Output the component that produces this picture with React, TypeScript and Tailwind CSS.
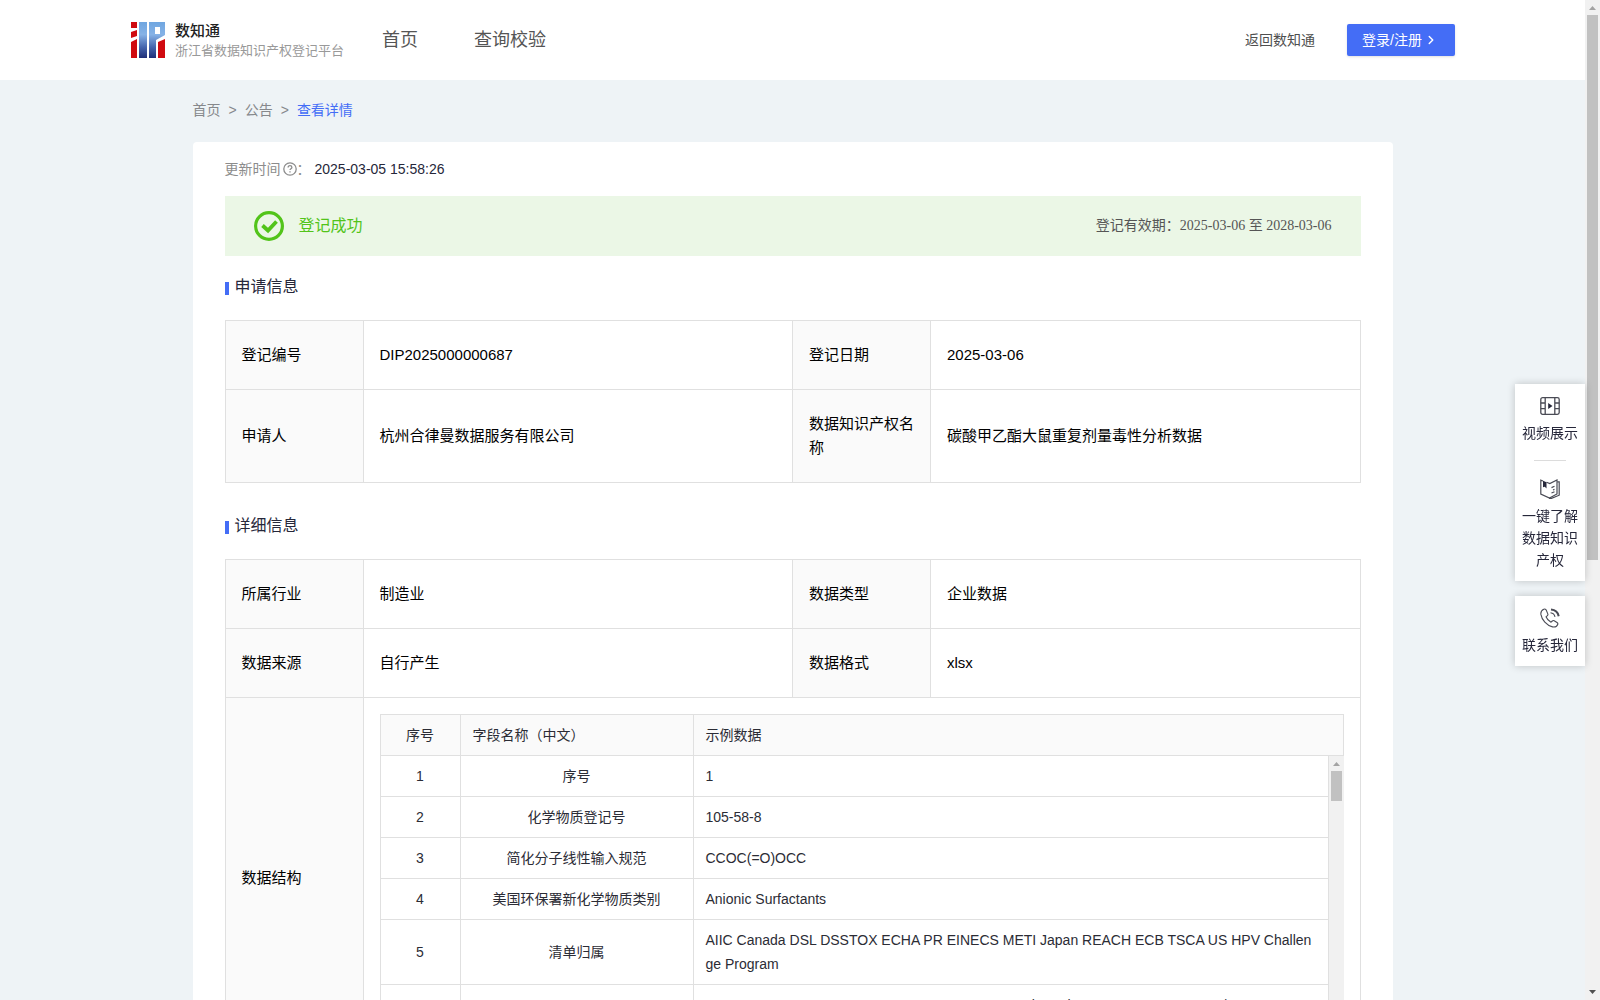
import type { ReactNode } from "react"
import { ChevronRight } from "lucide-react"

const sampleRows = [
  { name: "序号", value: "1" },
  { name: "化学物质登记号", value: "105-58-8" },
  { name: "简化分子线性输入规范", value: "CCOC(=O)OCC" },
  { name: "美国环保署新化学物质类别", value: "Anionic Surfactants" },
  {
    name: "清单归属",
    value: "AIIC Canada DSL DSSTOX ECHA PR EINECS METI Japan REACH ECB TSCA US HPV Challenge Program",
  },
  {
    name: "数据库归属",
    value: "ISSSTY, DART, ECHA ReproTox, Genotox OASIS, Phys Chem EPI, CLI, Cosm, DB/OASIS, Exp Bio",
  },
]

const Logo = () => (
  <svg width="34" height="36" viewBox="0 0 34 36" aria-hidden="true">
    <defs>
      <linearGradient id="logo-blue" x1="0" y1="0" x2="0" y2="36" gradientUnits="userSpaceOnUse">
        <stop offset="0" stopColor="#6fa6e0" />
        <stop offset="0.35" stopColor="#86b2e6" />
        <stop offset="0.7" stopColor="#4565ad" />
        <stop offset="1" stopColor="#1f2f78" />
      </linearGradient>
    </defs>
    <path d="M0 0h6v6H0zM0 10l6-2v6l-6 2zM0 20l6-3v19H0z" fill="#d00a10" />
    <path d="M8 0h8v36H8z" fill="url(#logo-blue)" />
    <path d="M18 0h16v13l-9 5v18h-7zM24 5v7h5V5z" fillRule="evenodd" fill="url(#logo-blue)" />
    <path d="M27 20l7-3v19h-7z" fill="#d00a10" />
  </svg>
)

const VideoIcon = () => (
  <svg width="20" height="20" viewBox="0 0 20 20" fill="none" stroke="#4a4b55" strokeWidth="1.3" aria-hidden="true">
    <rect x="0.8" y="1.6" width="18.4" height="16.8" rx="1.8" />
    <path d="M5.2 1.6v16.8M14.8 1.6v16.8M0.8 7h4.4M0.8 12.6h4.4M14.8 7h4.4M14.8 12.6h4.4" />
    <path d="M8.2 7v6l4.3-3z" fill="#26273a" stroke="none" />
  </svg>
)

const BookIcon = () => (
  <svg width="20" height="20" viewBox="0 0 20 20" fill="none" stroke="#4a4b55" strokeWidth="1.2" aria-hidden="true">
    <path d="M3 2L.8 1.200v13.800l8.700 4 7.500-4V1L9.800 4.600 6.500 3.300" />
    <path d="M17.200 2.800h2v13.400l-7.700 3.200H9" />
    <path d="M11.500 8.600l3-1.300M11.500 14l3-1.300M13 11l1.500-.6" />
    <path d="M3 1.800l3.500 1.400v6.300L4.800 7.800 3 8.200z" fill="#26273a" stroke="none" />
  </svg>
)

const PhoneIcon = () => (
  <svg width="20" height="20" viewBox="0 0 20 20" fill="none" stroke="#4a4b55" strokeWidth="1.1" aria-hidden="true">
    <path d="M3.8 1.2C1.4 2.2.6 4 .9 6.4c.8 5.4 5.8 11.2 11.6 12.5 2.300.5 4.300-.3 5.200-2.400.4-.9.1-1.500-.7-2l-2.800-1.700c-.7-.4-1.300-.3-1.900.2l-1.300 1.200C8.700 13 6.900 11 6 8.800l1.400-1.200c.6-.5.7-1 .4-1.700L6.300 2.200c-.4-1-1.300-1.500-2.500-1z" />
    <path d="M10.500 4.800c2.400.3 4 1.800 4.500 4" />
    <path d="M11 1.600c4 .3 7 2.900 7.700 6.700" strokeWidth="2" />
  </svg>
)

const SuccessIcon = () => (
  <svg width="30" height="30" viewBox="0 0 30 30" fill="none" stroke="#52c41a" aria-hidden="true">
    <circle cx="15" cy="15" r="13.4" strokeWidth="3.2" />
    <path d="M8.500 14.500l5.500 5 8.500-9" strokeWidth="3.800" />
  </svg>
)

const QuestionIcon = () => (
  <svg width="14" height="14" viewBox="0 0 14 14" fill="none" stroke="#8c8c8c" strokeWidth="1.3" aria-hidden="true">
    <circle cx="7" cy="7" r="6.2" />
    <path d="M5.1 5.6C5.1 4.4 5.900 3.700 7 3.700s1.900.7 1.900 1.700c0 1.300-1.900 1.400-1.900 2.700" />
    <path d="M7 9.300v1.300" />
  </svg>
)

const Scrollbar = ({ thumb, down }: { thumb: string; down?: boolean }) => (
  <div className="flex w-[15px] shrink-0 flex-col items-center bg-[#f1f1f1]" aria-hidden="true">
    <svg className="shrink-0" width="15" height="15" viewBox="0 0 15 15">
      <path d="M4 10h7L7.5 6z" fill="#a3a3a3" />
    </svg>
    <div className={`w-[11px] shrink-0 bg-[#c1c1c1] ${thumb}`} />
    {down && (
      <svg className="mt-auto shrink-0" width="15" height="15" viewBox="0 0 15 15">
        <path d="M4 5h7l-3.5 4z" fill="#505050" />
      </svg>
    )}
  </div>
)

const SectionTitle = ({ children }: { children: ReactNode }) => (
  <h2 className="flex items-center gap-1.5 text-base leading-6 text-[#26273a]">
    <span className="mt-0.5 h-[13px] w-1 bg-[#446df6]" />
    {children}
  </h2>
)

const Th = ({ children }: { children: ReactNode }) => (
  <th scope="row" className="border border-[#e0e0e0] bg-[#fafafa] px-4 py-[22px] text-left font-normal">
    {children}
  </th>
)

const Td = ({ children }: { children: ReactNode }) => (
  <td className="border border-[#e0e0e0] px-4 py-[22px]">{children}</td>
)

const InfoTable = ({ children }: { children: ReactNode }) => (
  <table className="w-full table-fixed border-collapse text-[15px] leading-6 text-black">
    <colgroup>
      <col className="w-[138px]" />
      <col />
      <col className="w-[138px]" />
      <col />
    </colgroup>
    <tbody>{children}</tbody>
  </table>
)

const Header = () => (
  <header className="flex h-20 items-center bg-white pr-[130px] pl-[131px]">
    <a href="#" className="flex items-center gap-2.5">
      <Logo />
      <span className="flex flex-col pt-0.5">
        <span className="text-[15px] leading-5 font-medium text-[#222222]">数知通</span>
        <span className="text-[13px] leading-5 text-[#999999]">浙江省数据知识产权登记平台</span>
      </span>
    </a>
    <nav className="ml-[38px] flex gap-14 text-lg text-[#555555]">
      <a href="#">首页</a>
      <a href="#">查询校验</a>
    </nav>
    <div className="ml-auto flex items-center gap-8 text-sm">
      <a href="#" className="text-[#4f4f4f]">
        返回数知通
      </a>
      <button className="flex h-8 w-[108px] items-center gap-0.5 rounded-xs bg-[#446df6] pl-[15px] text-white shadow-sm">
        登录/注册
        <ChevronRight size={14} strokeWidth={2.5} />
      </button>
    </div>
  </header>
)

const SampleTable = () => (
  <div className="text-sm leading-6 text-[#2b2c35]">
    <table className="w-full table-fixed border-collapse">
      <colgroup>
        <col className="w-20" />
        <col className="w-[233px]" />
        <col />
      </colgroup>
      <thead className="bg-[#fafafa]">
        <tr>
          <th className="border border-[#e0e0e0] px-3 py-2 text-center font-normal">序号</th>
          <th className="border border-[#e0e0e0] px-3 py-2 text-left font-normal">字段名称（中文）</th>
          <th className="border border-[#e0e0e0] px-3 py-2 text-left font-normal">示例数据</th>
        </tr>
      </thead>
    </table>
    <div className="flex h-[286px] overflow-hidden">
      <div className="flex-1">
        <table className="w-full table-fixed border-collapse">
          <colgroup>
            <col className="w-20" />
            <col className="w-[233px]" />
            <col />
          </colgroup>
          <tbody>
            {sampleRows.map((row, index) => (
              <tr key={row.name}>
                <td className="border border-t-0 border-[#e0e0e0] px-3 py-2 text-center">{index + 1}</td>
                <td className="border border-t-0 border-[#e0e0e0] px-3 py-2 text-center">{row.name}</td>
                <td className="border border-t-0 border-[#e0e0e0] px-3 py-2 break-all">{row.value}</td>
              </tr>
            ))}
          </tbody>
        </table>
      </div>
      <Scrollbar thumb="h-[30px]" />
    </div>
  </div>
)

const SideBar = () => (
  <aside className="fixed top-96 right-[15px] flex w-[70px] flex-col gap-[15px] text-sm leading-[22px] text-[#26273a]">
    <div className="flex flex-col items-center bg-white pt-3 pb-2.5 shadow-[0_0_8px_rgba(0,0,0,0.2)]">
      <a href="#" className="flex flex-col items-center gap-1.5">
        <VideoIcon />
        视频展示
      </a>
      <div className="mt-4 mb-[18px] h-px w-8 bg-[#dcdcdc]" />
      <a href="#" className="flex flex-col items-center gap-1.5 px-[7px] text-center">
        <BookIcon />
        一键了解数据知识产权
      </a>
    </div>
    <div className="flex flex-col items-center bg-white pt-3 pb-2.5 shadow-[0_0_8px_rgba(0,0,0,0.2)]">
      <a href="#" className="flex flex-col items-center gap-1.5">
        <PhoneIcon />
        联系我们
      </a>
    </div>
  </aside>
)

const App = () => {
  return (
    <div className="flex h-screen overflow-hidden bg-[#eef3f6] font-['Liberation_Sans','Noto_Sans_CJK_SC',sans-serif]">
      <div className="min-w-0 flex-1 overflow-hidden">
        <Header />
        <main className="mx-auto max-w-[1200px]">
          <nav className="flex gap-2 pt-5 pb-[22px] text-sm text-[#86888c]" aria-label="breadcrumb">
            <a href="#">首页</a>
            <span>&gt;</span>
            <a href="#">公告</a>
            <span>&gt;</span>
            <a href="#" className="text-[#446df6]">
              查看详情
            </a>
          </nav>

          <div className="rounded-sm bg-white px-8 pt-4 pb-8">
            <div className="flex items-center text-sm leading-[22px] text-[#8c8c8c]">
              更新时间
              <span className="ml-0.5">
                <QuestionIcon />
              </span>
              ：<span className="ml-1 text-[#26273a]">2025-03-05 15:58:26</span>
            </div>

            <div className="mt-4 flex h-15 items-center bg-[#ebf7e6] px-[29px]">
              <SuccessIcon />
              <span className="ml-[15px] text-base text-[#52c41a]">登记成功</span>
              <span className="ml-auto font-['Liberation_Serif','Noto_Sans_CJK_SC',serif] text-sm text-[#555555]">
                登记有效期：2025-03-06 至 2028-03-06
              </span>
            </div>

            <div className="mt-[19px] mb-[21px]">
              <SectionTitle>申请信息</SectionTitle>
            </div>
            <InfoTable>
              <tr>
                <Th>登记编号</Th>
                <Td>DIP2025000000687</Td>
                <Th>登记日期</Th>
                <Td>2025-03-06</Td>
              </tr>
              <tr>
                <Th>申请人</Th>
                <Td>杭州合律曼数据服务有限公司</Td>
                <Th>数据知识产权名称</Th>
                <Td>碳酸甲乙酯大鼠重复剂量毒性分析数据</Td>
              </tr>
            </InfoTable>

            <div className="mt-[31px] mb-[21px]">
              <SectionTitle>详细信息</SectionTitle>
            </div>
            <InfoTable>
              <tr>
                <Th>所属行业</Th>
                <Td>制造业</Td>
                <Th>数据类型</Th>
                <Td>企业数据</Td>
              </tr>
              <tr>
                <Th>数据来源</Th>
                <Td>自行产生</Td>
                <Th>数据格式</Th>
                <Td>xlsx</Td>
              </tr>
              <tr>
                <Th>数据结构</Th>
                <td colSpan={3} className="border border-[#e0e0e0] p-4">
                  <SampleTable />
                </td>
              </tr>
            </InfoTable>
          </div>
        </main>
      </div>
      <Scrollbar thumb="h-[54.5%]" down />
      <SideBar />
    </div>
  )
}

export default App
